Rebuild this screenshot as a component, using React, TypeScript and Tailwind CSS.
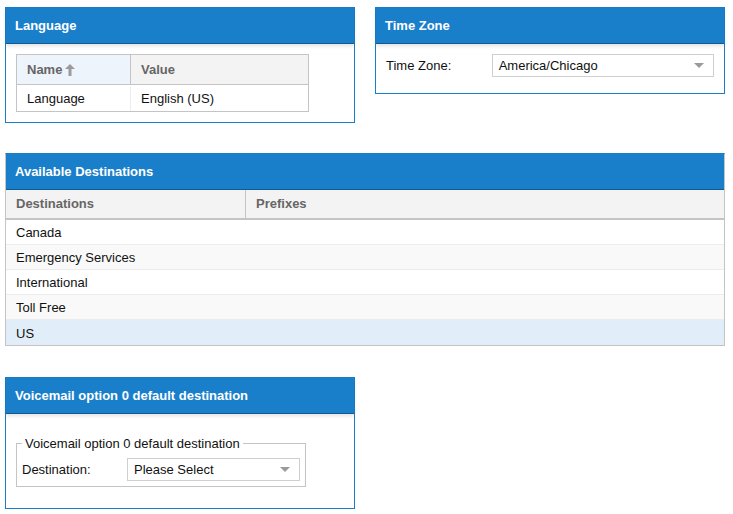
import React from "react";

const font = { fontFamily: "'Liberation Sans', Arial, sans-serif" };

function Panel({ title, className, shadow = true, children }: { title: string; className?: string; shadow?: boolean; children?: React.ReactNode }) {
  return (
    <div className={"border border-[#1a7dc9] bg-white " + (className || "")}>
      <div
        className={
          "relative h-[36px] bg-[#1a7fcb] flex items-center px-[9px] text-white font-bold text-[13px] border-b border-[#12598f] " +
          (shadow ? "shadow-[0_2px_4px_rgba(0,0,0,0.12)]" : "")
        }
      >
        {title}
      </div>
      {children}
    </div>
  );
}

function Caret() {
  return (
    <svg width="10" height="6" viewBox="0 0 10 6" className="text-[#9a9a9a]">
      <path d="M0 0 L10 0 L5 5 Z" fill="currentColor" />
    </svg>
  );
}

function Select({ value, className }: { value: string; className?: string }) {
  return (
    <div className={"h-[23px] border border-[#cfcfcf] bg-white flex items-center justify-between pl-[6px] pr-[9px] pt-[1px] text-[13px] text-[#111] " + (className || "")}>
      <span>{value}</span>
      <Caret />
    </div>
  );
}

export default function App() {
  const rows = ["Canada", "Emergency Services", "International", "Toll Free", "US"];
  return (
    <div style={font} className="w-[733px] h-[514px] bg-white pl-[5px] pt-[7px] text-[13px] text-[#111]">
      <div className="flex gap-[20px]">
        <Panel title="Language" className="w-[350px] h-[116px]">
          <div className="px-[10px] pt-[10px]">
            <div className="w-[293px] border border-[#c4c4c4]">
              <div className="flex h-[30px] border-b border-[#c4c4c4]">
                <div className="w-[114px] bg-[#edf4fc] border-r border-[#c4c4c4] flex items-center pl-[10px] font-bold text-[#666]">
                  Name
                  <svg width="10" height="12" viewBox="0 0 10 12" className="ml-[3px]">
                    <path d="M5 0 L10 5 L6.5 5 L6.5 12 L3.5 12 L3.5 5 L0 5 Z" fill="#9b9b9b" />
                  </svg>
                </div>
                <div className="flex-1 bg-[#f3f3f3] flex items-center pl-[10px] font-bold text-[#666]">Value</div>
              </div>
              <div className="flex h-[26px] pt-[1px]">
                <div className="w-[114px] border-r border-[#ececec] flex items-center pl-[10px]">Language</div>
                <div className="flex-1 flex items-center pl-[10px]">English (US)</div>
              </div>
            </div>
          </div>
        </Panel>
        <Panel title="Time Zone" className="w-[350px] h-[87px]">
          <div className="flex items-center px-[10px] pt-[10px]">
            <div className="w-[106px]">Time Zone:</div>
            <Select value="America/Chicago" className="w-[223px]" />
          </div>
        </Panel>
      </div>

      <Panel title="Available Destinations" shadow={false} className="w-[720px] mt-[30px] border-b-[#c4c4c4] border-x-[#c4c4c4] border-t-[#1a7dc9]">
        <div className="flex h-[30px] bg-[#f3f3f3] border-b-2 border-[#c4c4c4] font-bold text-[#666]">
          <div className="w-[240px] border-r border-[#c4c4c4] flex items-center pl-[10px]">Destinations</div>
          <div className="flex-1 flex items-center pl-[10px]">Prefixes</div>
        </div>
        {rows.map((r, i) => (
          <div
            key={r}
            className={
              "h-[25px] flex items-center pl-[10px] pt-[2px] " +
              (i === 4
                ? "bg-[#e1edf8]"
                : i % 2 === 1
                ? "bg-[#f9f9f9] border-b border-[#ececec]"
                : "bg-white border-b border-[#ececec]")
            }
          >
            {r}
          </div>
        ))}
      </Panel>

      <Panel title="Voicemail option 0 default destination" className="w-[350px] h-[132px] mt-[31px]">
        <div className="px-[10px] pt-[22px]">
          <fieldset className="w-[290px] border border-[#c4c4c4] pl-[5px] pr-[5px] pb-[5px] pt-0">
            <legend className="px-[3px] ml-0 text-[13px] leading-[15px]">Voicemail option 0 default destination</legend>
            <div className="flex items-center mt-[7px]">
              <div className="w-[105px]">Destination:</div>
              <Select value="Please Select" className="w-[173px]" />
            </div>
          </fieldset>
        </div>
      </Panel>
    </div>
  );
}
